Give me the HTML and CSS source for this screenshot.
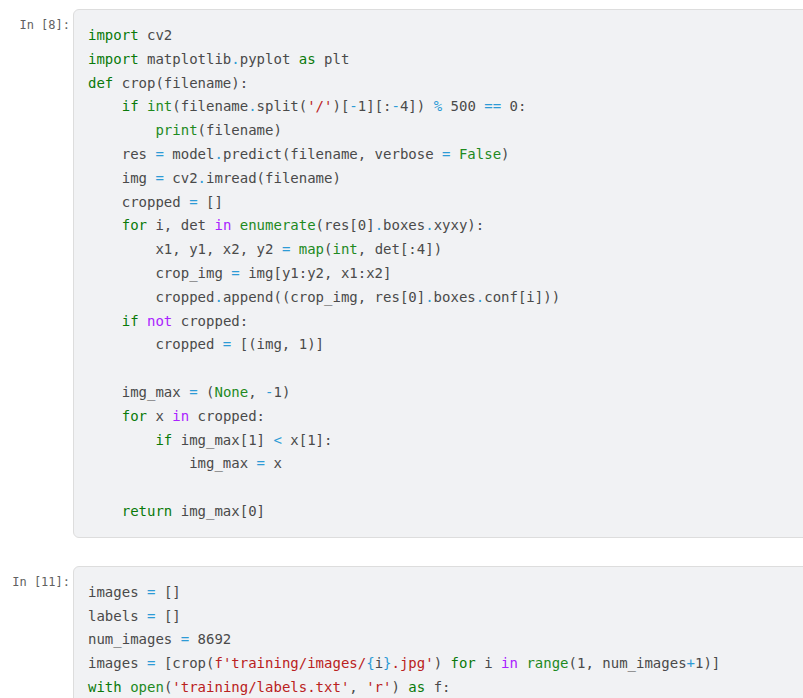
FILE: index.html
```html
<!DOCTYPE html>
<html>
<head>
<meta charset="utf-8">
<link rel="stylesheet" href="styles.css">
</head>
<body>
<div class="notebook">
  <div class="cell">
    <div class="prompt">In [8]:</div>
    <div class="input"><pre class="code"><span class="kw">import</span> cv2
<span class="kw">import</span> matplotlib<span class="op">.</span>pyplot <span class="kw">as</span> plt
<span class="kw">def</span> crop(filename):
    <span class="kw">if</span> <span class="bi">int</span>(filename<span class="op">.</span>split(<span class="st">'/'</span>)[<span class="op">-</span>1][:<span class="op">-</span>4]) <span class="op">%</span> 500 <span class="op">==</span> 0:
        <span class="bi">print</span>(filename)
    res <span class="op">=</span> model<span class="op">.</span>predict(filename, verbose <span class="op">=</span> <span class="bi">False</span>)
    img <span class="op">=</span> cv2<span class="op">.</span>imread(filename)
    cropped <span class="op">=</span> []
    <span class="kw">for</span> i, det <span class="ow">in</span> <span class="bi">enumerate</span>(res[0]<span class="op">.</span>boxes<span class="op">.</span>xyxy):
        x1, y1, x2, y2 <span class="op">=</span> <span class="bi">map</span>(<span class="bi">int</span>, det[:4])
        crop_img <span class="op">=</span> img[y1:y2, x1:x2]
        cropped<span class="op">.</span>append((crop_img, res[0]<span class="op">.</span>boxes<span class="op">.</span>conf[i]))
    <span class="kw">if</span> <span class="ow">not</span> cropped:
        cropped <span class="op">=</span> [(img, 1)]

    img_max <span class="op">=</span> (<span class="bi">None</span>, <span class="op">-</span>1)
    <span class="kw">for</span> x <span class="ow">in</span> cropped:
        <span class="kw">if</span> img_max[1] <span class="op">&lt;</span> x[1]:
            img_max <span class="op">=</span> x

    <span class="kw">return</span> img_max[0]</pre></div>
  </div>
  <div class="cell">
    <div class="prompt">In [11]:</div>
    <div class="input"><pre class="code">images <span class="op">=</span> []
labels <span class="op">=</span> []
num_images <span class="op">=</span> 8692
images <span class="op">=</span> [crop(<span class="st">f'training/images/</span><span class="op">{</span>i<span class="op">}</span><span class="st">.jpg'</span>) <span class="kw">for</span> i <span class="ow">in</span> <span class="bi">range</span>(1, num_images<span class="op">+</span>1)]
<span class="kw">with</span> <span class="bi">open</span>(<span class="st">'training/labels.txt'</span>, <span class="st">'r'</span>) <span class="kw">as</span> f:</pre></div>
  </div>
</div>
</body>
</html>
```
FILE: styles.css
```css
html, body {
  margin: 0;
  padding: 0;
  background: #ffffff;
  overflow: hidden;
}
.notebook {
  padding-top: 9px;
  display: flex;
  flex-direction: column;
  gap: 28px;
}
.cell {
  display: flex;
  align-items: flex-start;
}
.prompt {
  flex-shrink: 0;
  padding-right: 3px;
  box-sizing: border-box;
  width: 73px;
  text-align: right;
  font-family: "DejaVu Sans Mono", "Liberation Mono", monospace;
  font-size: 12px;
  line-height: 16px;
  color: #616161;
  padding-top: 8px;
}
.input {
  flex-shrink: 0;
  width: 760px;
  background: #f1f2f4;
  border: 1px solid #dddddd;
  border-radius: 6px;
  padding: 14px 14px 13px 14px;
  box-sizing: border-box;
}
.code {
  margin: 0;
  font-family: "DejaVu Sans Mono", "Liberation Mono", monospace;
  font-size: 14px;
  line-height: 23.8px;
  color: #4a4a4a;
  white-space: pre;
}
.kw { color: #0a7a0a; }
.bi { color: #1e8a1e; }
.ow { color: #aa22ff; }
.op { color: #2d9bd6; }
.st { color: #ba2121; }
```
